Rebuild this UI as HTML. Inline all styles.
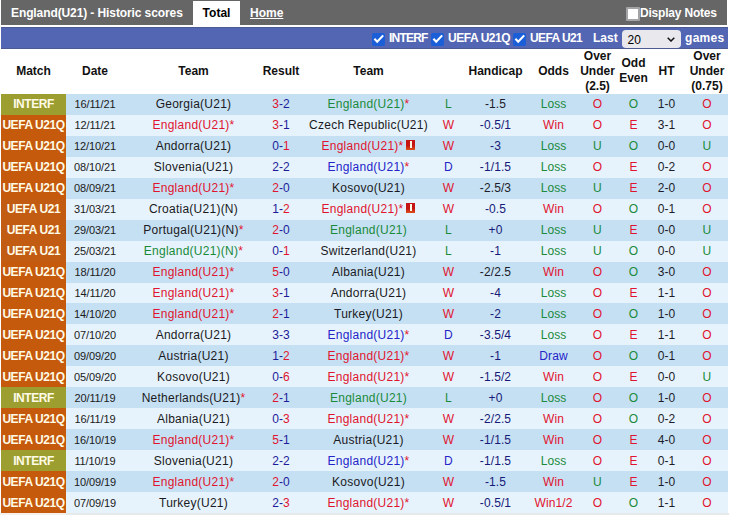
<!DOCTYPE html><html><head><meta charset="utf-8"><style>
html,body{margin:0;padding:0;background:#fff;width:729px;height:515px;overflow:hidden;position:relative;font-family:"Liberation Sans",sans-serif;}
.top{position:absolute;left:1px;top:0;width:726px;height:25px;background:#666;}
.title{position:absolute;left:11px;top:1px;height:25px;line-height:25px;color:#fff;font-weight:bold;font-size:12px;letter-spacing:-0.1px;}
.tab{position:absolute;left:193px;top:1px;width:47px;height:24px;background:#fff;color:#000;font-weight:bold;font-size:12px;line-height:24px;text-align:center;}
.home{position:absolute;left:250px;top:1px;line-height:25px;color:#fff;font-weight:bold;font-size:12px;text-decoration:underline;}
.dn{position:absolute;left:640px;top:1px;line-height:25px;color:#fff;font-weight:bold;font-size:12px;letter-spacing:-0.2px;}
.cbw{position:absolute;left:626px;top:7px;width:10px;height:10px;background:#fff;border:2px solid #a4a4a6;border-radius:1px;}
.bar{position:absolute;left:1px;top:27px;width:727px;height:22px;background:#5266b3;border-top:1px solid #4d5994;border-bottom:1px solid #4d5994;box-sizing:border-box;}
.cb{position:absolute;top:33px;width:13px;height:13px;background:#1a5ed8;border-radius:2px;}
.cb svg{position:absolute;left:0;top:0;}
.lab{position:absolute;top:28px;line-height:21px;color:#fff;font-weight:bold;font-size:12px;letter-spacing:-0.6px;}
.lab2{position:absolute;top:28px;line-height:21px;color:#fff;font-weight:bold;font-size:12px;}
.sel{position:absolute;left:622px;top:30px;width:59px;height:18px;background:#e9e9ed;border-radius:4px;}
.sel span{position:absolute;left:5.5px;top:1px;line-height:18px;font-size:12px;color:#000;}
.sel svg{position:absolute;left:45px;top:7px;}
.hrow{position:absolute;left:0;top:48px;width:729px;height:46px;}
.hc{position:absolute;top:0;height:46px;display:flex;align-items:center;justify-content:center;text-align:center;font-weight:bold;font-size:12px;line-height:15px;color:#111;}
.row{position:absolute;left:1px;width:727px;height:21px;}
.row .c{position:absolute;top:0;height:21px;line-height:21px;text-align:center;white-space:nowrap;font-size:12px;letter-spacing:0.1px;}
.ra{background:#c6e0f3;}
.rb{background:#e7f3fc;}
.mc{color:#fffbe6;font-weight:bold;font-size:12px !important;letter-spacing:-0.45px !important;}
.dt{font-size:11px !important;color:#1a1a1a;letter-spacing:-0.1px !important;}
.row .c.tm{font-size:12px;letter-spacing:0.25px;}
.st{color:#e0142e;}
.rc{display:inline-block;width:9px;height:10px;background:linear-gradient(#c41414 55%,#e0501a);margin-left:3px;vertical-align:0px;position:relative;}
.rc:after{content:"";position:absolute;left:3.5px;top:1px;width:2px;height:7px;background:#fff8e0;}
.bot{position:absolute;left:0;top:513px;width:729px;height:2px;background:#e6eaea;}
.bot i{position:absolute;left:0;top:0;width:66px;height:2px;background:#f5f0eb;}
.row .c.mc{top:0;height:100%;line-height:21px;}
.row.sh .c{top:1px;}
.row.sh .c.mc{top:0;line-height:23px;}

</style></head><body>
<div class="top"></div>
<div class="title">England(U21) - Historic scores</div>
<div class="tab">Total</div>
<div class="home">Home</div>
<div class="cbw"></div>
<div class="dn">Display Notes</div>
<div class="bar"></div>
<div class="cb" style="left:372px"><svg width="13" height="13"><path d="M2.4 5.8 L5.2 8.8 L11.2 2.4" stroke="#fff" stroke-width="2.1" fill="none"/></svg></div>
<div class="lab" style="left:389px;letter-spacing:-0.8px">INTERF</div>
<div class="cb" style="left:431px"><svg width="13" height="13"><path d="M2.4 5.8 L5.2 8.8 L11.2 2.4" stroke="#fff" stroke-width="2.1" fill="none"/></svg></div>
<div class="lab" style="left:448px;letter-spacing:-0.45px">UEFA U21Q</div>
<div class="cb" style="left:513px"><svg width="13" height="13"><path d="M2.4 5.8 L5.2 8.8 L11.2 2.4" stroke="#fff" stroke-width="2.1" fill="none"/></svg></div>
<div class="lab" style="left:530px">UEFA U21</div>
<div class="lab2" style="left:593px">Last</div>
<div class="sel"><span>20</span><svg width="8" height="5"><path d="M0.7 0.7 L4 4 L7.3 0.7" stroke="#111" stroke-width="1.5" fill="none"/></svg></div>
<div class="lab2" style="left:685px;letter-spacing:0.3px">games</div>

<div class="hrow">
<div class="hc hc1" style="left:1px;width:65px">Match</div>
<div class="hc hc1" style="left:66px;width:58px">Date</div>
<div class="hc hc1" style="left:124px;width:139px">Team</div>
<div class="hc hc1" style="left:263px;width:36px">Result</div>
<div class="hc hc1" style="left:299px;width:139px">Team</div>
<div class="hc hc1" style="left:438px;width:21px"></div>
<div class="hc hc1" style="left:459px;width:73px">Handicap</div>
<div class="hc hc1" style="left:532px;width:43px">Odds</div>
<div class="hc hc3" style="left:575px;width:45px">Over<br>Under<br>(2.5)</div>
<div class="hc hc2" style="left:620px;width:27px">Odd<br>Even</div>
<div class="hc hc1" style="left:647px;width:39px">HT</div>
<div class="hc hc3" style="left:686px;width:42px">Over<br>Under<br>(0.75)</div>
</div>
<div class="row ra" style="top:94px;height:21px">
<div class="c mc" style="left:0px;width:65px;background:#9c9e30">INTERF</div>
<div style="left:65px;width:58px" class="c dt">16/11/21</div>
<div style="left:123px;width:139px" class="c tm"><span style="color:#1a1a22">Georgia(U21)</span></div>
<div style="left:262px;width:36px" class="c sc"><span style="color:#e0142e">3</span><span style="color:#1c1c9a">-2</span></div>
<div style="left:298px;width:139px" class="c tm"><span style="color:#1a8a3a">England(U21)</span><span class="st">*</span></div>
<div class="c tx" style="left:437px;width:21px;color:#1a8a3a">L</div>
<div class="c tx" style="left:458px;width:73px;color:#1c1c2a">-1.5</div>
<div class="c tx" style="left:531px;width:43px;color:#1a8a3a">Loss</div>
<div class="c tx" style="left:574px;width:45px;color:#e0142e">O</div>
<div class="c tx" style="left:619px;width:27px;color:#1a8a3a">O</div>
<div class="c tx" style="left:646px;width:39px;color:#1c1c2a">1-0</div>
<div class="c tx" style="left:685px;width:42px;color:#e0142e">O</div>
</div>
<div class="row rb" style="top:115px;height:21px">
<div class="c mc" style="left:0px;width:65px;background:#c55a0c">UEFA U21Q</div>
<div style="left:65px;width:58px" class="c dt">12/11/21</div>
<div style="left:123px;width:139px" class="c tm"><span style="color:#e0142e">England(U21)</span><span class="st">*</span></div>
<div style="left:262px;width:36px" class="c sc"><span style="color:#e0142e">3</span><span style="color:#1c1c9a">-1</span></div>
<div style="left:298px;width:139px" class="c tm"><span style="color:#1a1a22">Czech Republic(U21)</span></div>
<div class="c tx" style="left:437px;width:21px;color:#e0142e">W</div>
<div class="c tx" style="left:458px;width:73px;color:#161a78">-0.5/1</div>
<div class="c tx" style="left:531px;width:43px;color:#e0142e">Win</div>
<div class="c tx" style="left:574px;width:45px;color:#e0142e">O</div>
<div class="c tx" style="left:619px;width:27px;color:#e0142e">E</div>
<div class="c tx" style="left:646px;width:39px;color:#1c1c2a">3-1</div>
<div class="c tx" style="left:685px;width:42px;color:#e0142e">O</div>
</div>
<div class="row ra" style="top:136px;height:21px">
<div class="c mc" style="left:0px;width:65px;background:#c55a0c">UEFA U21Q</div>
<div style="left:65px;width:58px" class="c dt">12/10/21</div>
<div style="left:123px;width:139px" class="c tm"><span style="color:#1a1a22">Andorra(U21)</span></div>
<div style="left:262px;width:36px" class="c sc"><span style="color:#1c1c9a">0-</span><span style="color:#e0142e">1</span></div>
<div style="left:298px;width:139px" class="c tm"><span style="color:#e0142e">England(U21)</span><span class="st">*</span><i class="rc"></i></div>
<div class="c tx" style="left:437px;width:21px;color:#e0142e">W</div>
<div class="c tx" style="left:458px;width:73px;color:#161a78">-3</div>
<div class="c tx" style="left:531px;width:43px;color:#1a8a3a">Loss</div>
<div class="c tx" style="left:574px;width:45px;color:#1a8a3a">U</div>
<div class="c tx" style="left:619px;width:27px;color:#1a8a3a">O</div>
<div class="c tx" style="left:646px;width:39px;color:#1c1c2a">0-0</div>
<div class="c tx" style="left:685px;width:42px;color:#1a8a3a">U</div>
</div>
<div class="row rb" style="top:157px;height:21px">
<div class="c mc" style="left:0px;width:65px;background:#c55a0c">UEFA U21Q</div>
<div style="left:65px;width:58px" class="c dt">08/10/21</div>
<div style="left:123px;width:139px" class="c tm"><span style="color:#1a1a22">Slovenia(U21)</span></div>
<div style="left:262px;width:36px" class="c sc"><span style="color:#1c1c9a">2-2</span></div>
<div style="left:298px;width:139px" class="c tm"><span style="color:#2424c8">England(U21)</span><span class="st">*</span></div>
<div class="c tx" style="left:437px;width:21px;color:#2424c8">D</div>
<div class="c tx" style="left:458px;width:73px;color:#161a78">-1/1.5</div>
<div class="c tx" style="left:531px;width:43px;color:#1a8a3a">Loss</div>
<div class="c tx" style="left:574px;width:45px;color:#e0142e">O</div>
<div class="c tx" style="left:619px;width:27px;color:#e0142e">E</div>
<div class="c tx" style="left:646px;width:39px;color:#1c1c2a">0-2</div>
<div class="c tx" style="left:685px;width:42px;color:#e0142e">O</div>
</div>
<div class="row ra" style="top:178px;height:21px">
<div class="c mc" style="left:0px;width:65px;background:#c55a0c">UEFA U21Q</div>
<div style="left:65px;width:58px" class="c dt">08/09/21</div>
<div style="left:123px;width:139px" class="c tm"><span style="color:#e0142e">England(U21)</span><span class="st">*</span></div>
<div style="left:262px;width:36px" class="c sc"><span style="color:#e0142e">2</span><span style="color:#1c1c9a">-0</span></div>
<div style="left:298px;width:139px" class="c tm"><span style="color:#1a1a22">Kosovo(U21)</span></div>
<div class="c tx" style="left:437px;width:21px;color:#e0142e">W</div>
<div class="c tx" style="left:458px;width:73px;color:#1c1c2a">-2.5/3</div>
<div class="c tx" style="left:531px;width:43px;color:#1a8a3a">Loss</div>
<div class="c tx" style="left:574px;width:45px;color:#1a8a3a">U</div>
<div class="c tx" style="left:619px;width:27px;color:#e0142e">E</div>
<div class="c tx" style="left:646px;width:39px;color:#1c1c2a">2-0</div>
<div class="c tx" style="left:685px;width:42px;color:#e0142e">O</div>
</div>
<div class="row rb" style="top:199px;height:21px">
<div class="c mc" style="left:0px;width:65px;background:#c25c12">UEFA U21</div>
<div style="left:65px;width:58px" class="c dt">31/03/21</div>
<div style="left:123px;width:139px" class="c tm"><span style="color:#1a1a22">Croatia(U21)(N)</span></div>
<div style="left:262px;width:36px" class="c sc"><span style="color:#1c1c9a">1-</span><span style="color:#e0142e">2</span></div>
<div style="left:298px;width:139px" class="c tm"><span style="color:#e0142e">England(U21)</span><span class="st">*</span><i class="rc"></i></div>
<div class="c tx" style="left:437px;width:21px;color:#e0142e">W</div>
<div class="c tx" style="left:458px;width:73px;color:#161a78">-0.5</div>
<div class="c tx" style="left:531px;width:43px;color:#e0142e">Win</div>
<div class="c tx" style="left:574px;width:45px;color:#e0142e">O</div>
<div class="c tx" style="left:619px;width:27px;color:#1a8a3a">O</div>
<div class="c tx" style="left:646px;width:39px;color:#1c1c2a">0-1</div>
<div class="c tx" style="left:685px;width:42px;color:#e0142e">O</div>
</div>
<div class="row ra" style="top:220px;height:21px">
<div class="c mc" style="left:0px;width:65px;background:#c25c12">UEFA U21</div>
<div style="left:65px;width:58px" class="c dt">29/03/21</div>
<div style="left:123px;width:139px" class="c tm"><span style="color:#1a1a22">Portugal(U21)(N)</span><span class="st">*</span></div>
<div style="left:262px;width:36px" class="c sc"><span style="color:#e0142e">2</span><span style="color:#1c1c9a">-0</span></div>
<div style="left:298px;width:139px" class="c tm"><span style="color:#1a8a3a">England(U21)</span></div>
<div class="c tx" style="left:437px;width:21px;color:#1a8a3a">L</div>
<div class="c tx" style="left:458px;width:73px;color:#161a78">+0</div>
<div class="c tx" style="left:531px;width:43px;color:#1a8a3a">Loss</div>
<div class="c tx" style="left:574px;width:45px;color:#1a8a3a">U</div>
<div class="c tx" style="left:619px;width:27px;color:#e0142e">E</div>
<div class="c tx" style="left:646px;width:39px;color:#1c1c2a">0-0</div>
<div class="c tx" style="left:685px;width:42px;color:#1a8a3a">U</div>
</div>
<div class="row rb" style="top:241px;height:21px">
<div class="c mc" style="left:0px;width:65px;background:#c25c12">UEFA U21</div>
<div style="left:65px;width:58px" class="c dt">25/03/21</div>
<div style="left:123px;width:139px" class="c tm"><span style="color:#1a8a3a">England(U21)(N)</span><span class="st">*</span></div>
<div style="left:262px;width:36px" class="c sc"><span style="color:#1c1c9a">0-</span><span style="color:#e0142e">1</span></div>
<div style="left:298px;width:139px" class="c tm"><span style="color:#1a1a22">Switzerland(U21)</span></div>
<div class="c tx" style="left:437px;width:21px;color:#1a8a3a">L</div>
<div class="c tx" style="left:458px;width:73px;color:#161a78">-1</div>
<div class="c tx" style="left:531px;width:43px;color:#1a8a3a">Loss</div>
<div class="c tx" style="left:574px;width:45px;color:#1a8a3a">U</div>
<div class="c tx" style="left:619px;width:27px;color:#1a8a3a">O</div>
<div class="c tx" style="left:646px;width:39px;color:#1c1c2a">0-0</div>
<div class="c tx" style="left:685px;width:42px;color:#1a8a3a">U</div>
</div>
<div class="row ra" style="top:262px;height:21px">
<div class="c mc" style="left:0px;width:65px;background:#c55a0c">UEFA U21Q</div>
<div style="left:65px;width:58px" class="c dt">18/11/20</div>
<div style="left:123px;width:139px" class="c tm"><span style="color:#e0142e">England(U21)</span><span class="st">*</span></div>
<div style="left:262px;width:36px" class="c sc"><span style="color:#e0142e">5</span><span style="color:#1c1c9a">-0</span></div>
<div style="left:298px;width:139px" class="c tm"><span style="color:#1a1a22">Albania(U21)</span></div>
<div class="c tx" style="left:437px;width:21px;color:#e0142e">W</div>
<div class="c tx" style="left:458px;width:73px;color:#1c1c2a">-2/2.5</div>
<div class="c tx" style="left:531px;width:43px;color:#e0142e">Win</div>
<div class="c tx" style="left:574px;width:45px;color:#e0142e">O</div>
<div class="c tx" style="left:619px;width:27px;color:#1a8a3a">O</div>
<div class="c tx" style="left:646px;width:39px;color:#1c1c2a">3-0</div>
<div class="c tx" style="left:685px;width:42px;color:#e0142e">O</div>
</div>
<div class="row rb" style="top:283px;height:20px">
<div class="c mc" style="left:0px;width:65px;background:#c55a0c">UEFA U21Q</div>
<div style="left:65px;width:58px" class="c dt">14/11/20</div>
<div style="left:123px;width:139px" class="c tm"><span style="color:#e0142e">England(U21)</span><span class="st">*</span></div>
<div style="left:262px;width:36px" class="c sc"><span style="color:#e0142e">3</span><span style="color:#1c1c9a">-1</span></div>
<div style="left:298px;width:139px" class="c tm"><span style="color:#1a1a22">Andorra(U21)</span></div>
<div class="c tx" style="left:437px;width:21px;color:#e0142e">W</div>
<div class="c tx" style="left:458px;width:73px;color:#161a78">-4</div>
<div class="c tx" style="left:531px;width:43px;color:#1a8a3a">Loss</div>
<div class="c tx" style="left:574px;width:45px;color:#e0142e">O</div>
<div class="c tx" style="left:619px;width:27px;color:#e0142e">E</div>
<div class="c tx" style="left:646px;width:39px;color:#1c1c2a">1-1</div>
<div class="c tx" style="left:685px;width:42px;color:#e0142e">O</div>
</div>
<div class="row ra sh" style="top:303px;height:21px">
<div class="c mc" style="left:0px;width:65px;background:#c55a0c">UEFA U21Q</div>
<div style="left:65px;width:58px" class="c dt">14/10/20</div>
<div style="left:123px;width:139px" class="c tm"><span style="color:#e0142e">England(U21)</span><span class="st">*</span></div>
<div style="left:262px;width:36px" class="c sc"><span style="color:#e0142e">2</span><span style="color:#1c1c9a">-1</span></div>
<div style="left:298px;width:139px" class="c tm"><span style="color:#1a1a22">Turkey(U21)</span></div>
<div class="c tx" style="left:437px;width:21px;color:#e0142e">W</div>
<div class="c tx" style="left:458px;width:73px;color:#161a78">-2</div>
<div class="c tx" style="left:531px;width:43px;color:#1a8a3a">Loss</div>
<div class="c tx" style="left:574px;width:45px;color:#e0142e">O</div>
<div class="c tx" style="left:619px;width:27px;color:#1a8a3a">O</div>
<div class="c tx" style="left:646px;width:39px;color:#1c1c2a">1-0</div>
<div class="c tx" style="left:685px;width:42px;color:#e0142e">O</div>
</div>
<div class="row rb sh" style="top:324px;height:21px">
<div class="c mc" style="left:0px;width:65px;background:#c55a0c">UEFA U21Q</div>
<div style="left:65px;width:58px" class="c dt">07/10/20</div>
<div style="left:123px;width:139px" class="c tm"><span style="color:#1a1a22">Andorra(U21)</span></div>
<div style="left:262px;width:36px" class="c sc"><span style="color:#1c1c9a">3-3</span></div>
<div style="left:298px;width:139px" class="c tm"><span style="color:#2424c8">England(U21)</span><span class="st">*</span></div>
<div class="c tx" style="left:437px;width:21px;color:#2424c8">D</div>
<div class="c tx" style="left:458px;width:73px;color:#161a78">-3.5/4</div>
<div class="c tx" style="left:531px;width:43px;color:#1a8a3a">Loss</div>
<div class="c tx" style="left:574px;width:45px;color:#e0142e">O</div>
<div class="c tx" style="left:619px;width:27px;color:#e0142e">E</div>
<div class="c tx" style="left:646px;width:39px;color:#1c1c2a">1-1</div>
<div class="c tx" style="left:685px;width:42px;color:#e0142e">O</div>
</div>
<div class="row ra sh" style="top:345px;height:21px">
<div class="c mc" style="left:0px;width:65px;background:#c55a0c">UEFA U21Q</div>
<div style="left:65px;width:58px" class="c dt">09/09/20</div>
<div style="left:123px;width:139px" class="c tm"><span style="color:#1a1a22">Austria(U21)</span></div>
<div style="left:262px;width:36px" class="c sc"><span style="color:#1c1c9a">1-</span><span style="color:#e0142e">2</span></div>
<div style="left:298px;width:139px" class="c tm"><span style="color:#e0142e">England(U21)</span><span class="st">*</span></div>
<div class="c tx" style="left:437px;width:21px;color:#e0142e">W</div>
<div class="c tx" style="left:458px;width:73px;color:#161a78">-1</div>
<div class="c tx" style="left:531px;width:43px;color:#2424c8">Draw</div>
<div class="c tx" style="left:574px;width:45px;color:#e0142e">O</div>
<div class="c tx" style="left:619px;width:27px;color:#1a8a3a">O</div>
<div class="c tx" style="left:646px;width:39px;color:#1c1c2a">0-1</div>
<div class="c tx" style="left:685px;width:42px;color:#e0142e">O</div>
</div>
<div class="row rb sh" style="top:366px;height:21px">
<div class="c mc" style="left:0px;width:65px;background:#c55a0c">UEFA U21Q</div>
<div style="left:65px;width:58px" class="c dt">05/09/20</div>
<div style="left:123px;width:139px" class="c tm"><span style="color:#1a1a22">Kosovo(U21)</span></div>
<div style="left:262px;width:36px" class="c sc"><span style="color:#1c1c9a">0-</span><span style="color:#e0142e">6</span></div>
<div style="left:298px;width:139px" class="c tm"><span style="color:#e0142e">England(U21)</span><span class="st">*</span></div>
<div class="c tx" style="left:437px;width:21px;color:#e0142e">W</div>
<div class="c tx" style="left:458px;width:73px;color:#161a78">-1.5/2</div>
<div class="c tx" style="left:531px;width:43px;color:#e0142e">Win</div>
<div class="c tx" style="left:574px;width:45px;color:#e0142e">O</div>
<div class="c tx" style="left:619px;width:27px;color:#e0142e">E</div>
<div class="c tx" style="left:646px;width:39px;color:#1c1c2a">0-0</div>
<div class="c tx" style="left:685px;width:42px;color:#1a8a3a">U</div>
</div>
<div class="row ra sh" style="top:387px;height:21px">
<div class="c mc" style="left:0px;width:65px;background:#9c9e30">INTERF</div>
<div style="left:65px;width:58px" class="c dt">20/11/19</div>
<div style="left:123px;width:139px" class="c tm"><span style="color:#1a1a22">Netherlands(U21)</span><span class="st">*</span></div>
<div style="left:262px;width:36px" class="c sc"><span style="color:#e0142e">2</span><span style="color:#1c1c9a">-1</span></div>
<div style="left:298px;width:139px" class="c tm"><span style="color:#1a8a3a">England(U21)</span></div>
<div class="c tx" style="left:437px;width:21px;color:#1a8a3a">L</div>
<div class="c tx" style="left:458px;width:73px;color:#161a78">+0</div>
<div class="c tx" style="left:531px;width:43px;color:#1a8a3a">Loss</div>
<div class="c tx" style="left:574px;width:45px;color:#e0142e">O</div>
<div class="c tx" style="left:619px;width:27px;color:#1a8a3a">O</div>
<div class="c tx" style="left:646px;width:39px;color:#1c1c2a">1-0</div>
<div class="c tx" style="left:685px;width:42px;color:#e0142e">O</div>
</div>
<div class="row rb sh" style="top:408px;height:21px">
<div class="c mc" style="left:0px;width:65px;background:#c55a0c">UEFA U21Q</div>
<div style="left:65px;width:58px" class="c dt">16/11/19</div>
<div style="left:123px;width:139px" class="c tm"><span style="color:#1a1a22">Albania(U21)</span></div>
<div style="left:262px;width:36px" class="c sc"><span style="color:#1c1c9a">0-</span><span style="color:#e0142e">3</span></div>
<div style="left:298px;width:139px" class="c tm"><span style="color:#e0142e">England(U21)</span><span class="st">*</span></div>
<div class="c tx" style="left:437px;width:21px;color:#e0142e">W</div>
<div class="c tx" style="left:458px;width:73px;color:#161a78">-2/2.5</div>
<div class="c tx" style="left:531px;width:43px;color:#e0142e">Win</div>
<div class="c tx" style="left:574px;width:45px;color:#e0142e">O</div>
<div class="c tx" style="left:619px;width:27px;color:#1a8a3a">O</div>
<div class="c tx" style="left:646px;width:39px;color:#1c1c2a">0-2</div>
<div class="c tx" style="left:685px;width:42px;color:#e0142e">O</div>
</div>
<div class="row ra sh" style="top:429px;height:21px">
<div class="c mc" style="left:0px;width:65px;background:#c55a0c">UEFA U21Q</div>
<div style="left:65px;width:58px" class="c dt">16/10/19</div>
<div style="left:123px;width:139px" class="c tm"><span style="color:#e0142e">England(U21)</span><span class="st">*</span></div>
<div style="left:262px;width:36px" class="c sc"><span style="color:#e0142e">5</span><span style="color:#1c1c9a">-1</span></div>
<div style="left:298px;width:139px" class="c tm"><span style="color:#1a1a22">Austria(U21)</span></div>
<div class="c tx" style="left:437px;width:21px;color:#e0142e">W</div>
<div class="c tx" style="left:458px;width:73px;color:#161a78">-1/1.5</div>
<div class="c tx" style="left:531px;width:43px;color:#e0142e">Win</div>
<div class="c tx" style="left:574px;width:45px;color:#e0142e">O</div>
<div class="c tx" style="left:619px;width:27px;color:#e0142e">E</div>
<div class="c tx" style="left:646px;width:39px;color:#1c1c2a">4-0</div>
<div class="c tx" style="left:685px;width:42px;color:#e0142e">O</div>
</div>
<div class="row rb sh" style="top:450px;height:21px">
<div class="c mc" style="left:0px;width:65px;background:#9c9e30">INTERF</div>
<div style="left:65px;width:58px" class="c dt">11/10/19</div>
<div style="left:123px;width:139px" class="c tm"><span style="color:#1a1a22">Slovenia(U21)</span></div>
<div style="left:262px;width:36px" class="c sc"><span style="color:#1c1c9a">2-2</span></div>
<div style="left:298px;width:139px" class="c tm"><span style="color:#2424c8">England(U21)</span><span class="st">*</span></div>
<div class="c tx" style="left:437px;width:21px;color:#2424c8">D</div>
<div class="c tx" style="left:458px;width:73px;color:#161a78">-1/1.5</div>
<div class="c tx" style="left:531px;width:43px;color:#1a8a3a">Loss</div>
<div class="c tx" style="left:574px;width:45px;color:#e0142e">O</div>
<div class="c tx" style="left:619px;width:27px;color:#e0142e">E</div>
<div class="c tx" style="left:646px;width:39px;color:#1c1c2a">0-1</div>
<div class="c tx" style="left:685px;width:42px;color:#e0142e">O</div>
</div>
<div class="row ra sh" style="top:471px;height:21px">
<div class="c mc" style="left:0px;width:65px;background:#c55a0c">UEFA U21Q</div>
<div style="left:65px;width:58px" class="c dt">10/09/19</div>
<div style="left:123px;width:139px" class="c tm"><span style="color:#e0142e">England(U21)</span><span class="st">*</span></div>
<div style="left:262px;width:36px" class="c sc"><span style="color:#e0142e">2</span><span style="color:#1c1c9a">-0</span></div>
<div style="left:298px;width:139px" class="c tm"><span style="color:#1a1a22">Kosovo(U21)</span></div>
<div class="c tx" style="left:437px;width:21px;color:#e0142e">W</div>
<div class="c tx" style="left:458px;width:73px;color:#161a78">-1.5</div>
<div class="c tx" style="left:531px;width:43px;color:#e0142e">Win</div>
<div class="c tx" style="left:574px;width:45px;color:#1a8a3a">U</div>
<div class="c tx" style="left:619px;width:27px;color:#e0142e">E</div>
<div class="c tx" style="left:646px;width:39px;color:#1c1c2a">1-0</div>
<div class="c tx" style="left:685px;width:42px;color:#e0142e">O</div>
</div>
<div class="row rb sh" style="top:492px;height:21px">
<div class="c mc" style="left:0px;width:65px;background:#c55a0c">UEFA U21Q</div>
<div style="left:65px;width:58px" class="c dt">07/09/19</div>
<div style="left:123px;width:139px" class="c tm"><span style="color:#1a1a22">Turkey(U21)</span></div>
<div style="left:262px;width:36px" class="c sc"><span style="color:#1c1c9a">2-</span><span style="color:#e0142e">3</span></div>
<div style="left:298px;width:139px" class="c tm"><span style="color:#e0142e">England(U21)</span><span class="st">*</span></div>
<div class="c tx" style="left:437px;width:21px;color:#e0142e">W</div>
<div class="c tx" style="left:458px;width:73px;color:#161a78">-0.5/1</div>
<div class="c tx" style="left:531px;width:43px;color:#e0142e">Win1/2</div>
<div class="c tx" style="left:574px;width:45px;color:#e0142e">O</div>
<div class="c tx" style="left:619px;width:27px;color:#1a8a3a">O</div>
<div class="c tx" style="left:646px;width:39px;color:#1c1c2a">1-1</div>
<div class="c tx" style="left:685px;width:42px;color:#e0142e">O</div>
</div>
<div class="bot"><i></i></div>
</body></html>
